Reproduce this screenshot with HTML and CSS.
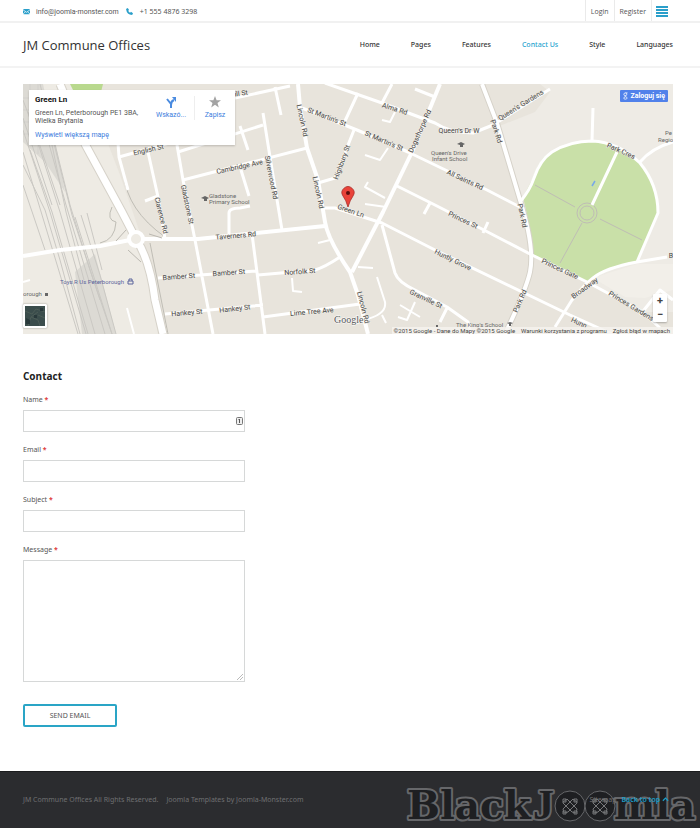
FILE: index.html
```html
<!DOCTYPE html>
<html lang="en">
<head>
<meta charset="utf-8">
<meta name="viewport" content="width=device-width, initial-scale=1">
<title>Contact Us - JM Commune Offices</title>
<link rel="stylesheet" href="styles.css">
</head>
<body>
<div class="topbar">
  <div class="contacts">
    <svg class="ico" viewBox="0 0 8 8" aria-hidden="true"><rect y="1" width="8" height="6" rx="1" fill="#2a9fca"/><path d="M0 2l4 3 4-3M0 7l3-3M8 7L5 4" fill="none" stroke="#fff" stroke-width=".8"/></svg>
    <a class="mail" href="#">info@joomla-monster.com</a>
    <svg class="ico phone" viewBox="0 0 8 8" aria-hidden="true"><path d="M0 1l2-1 1.500 2.200-1 1q.8 1.500 2.200 2.200l1-1L8 6 7 8Q1 7.500 0 1z" fill="#2a9fca"/></svg>
    <span>+1 555 4876 3298</span>
  </div>
  <div class="account">
    <a href="#">Login</a>
    <a href="#">Register</a>
    <button class="burger" type="button" aria-label="Menu"><i></i><i></i><i></i><i></i></button>
  </div>
</div>
<header class="header">
  <a class="logo" href="#">JM Commune Offices</a>
  <nav class="nav">
    <a href="#">Home</a><a href="#">Pages</a><a href="#">Features</a><a class="active" href="#">Contact Us</a><a href="#">Style</a><a href="#">Languages</a>
  </nav>
</header>
<main class="main">
  <section class="map">
    <svg class="canvas" viewBox="23 84 650 250" role="img" aria-label="Map of Green Ln, Peterborough">
      <rect x="23" y="84" width="650" height="250" fill="#e8e4dc"/>
      <path d="M23 84H85L120 175L142 239L158 334H23z" fill="#eeebe4"/>
      <path d="M482 84H673V312L643 312L587 282L532 255L520 200z" fill="#eeebe5"/>
      <path d="M470 84H540L550 92L535 112L497 127L470 135z" fill="#e8e4dc"/>
      <path d="M593 278L637 264H673V290L645 298L625 297z" fill="#f2efe9"/>
      <path d="M70 84h33l-3 12H76z" fill="#b9d98e"/>
      <path d="M523 197L532 180Q538 163 545 156Q565 141 592 141Q612 142 640 163Q656 180 658 210Q655 225 646 241L637 262Q612 266 587 282L532 255Q530 225 523 197z" fill="#c9e0a8"/>
      <g fill="#dcdad4"><path d="M23 84h20l14 66 8 42-20-30-22-20z"/><path d="M75 272L95 254L116 334H82z"/></g>
      <g class="rails">
        <path d="M23 152L78 334M23 130L50 212L86 334M28 112L60 212L95 334M34 90L66 205L105 334M40 84L70 205L90 270L112 334M46 112L72 215L100 300M23 165L45 210L60 260L80 334M30 150L52 212L88 334M52 145L66 212L84 280M75 217L98 290L112 334M81 215L100 275L116 334M87 213L102 270M23 185L45 250M23 100L38 140L60 205M23 118L52 205"/>
        <path d="M30 84v50M38 84v70M23 98h22M23 110h25M23 122h28M23 134h30" opacity=".5"/>
      </g>
      <g class="lane"><path d="M112 207Q106 220 116 222Q115 240 100 243M124 175Q127 210 165 237M150 243L168 334M535 185L575 207M600 219L642 240M582 223L560 263"/><circle cx="587" cy="213" r="10"/><circle cx="587" cy="213" r="7"/></g>
      <g class="casing road"><path d="M60 84L85 144L122 212L136 239Q150 260 155 300L163 334" stroke-width="9"/><path d="M482 84L497 123L520 200Q535 248 530 272Q526 290 505 334" stroke-width="6"/></g>
      <g class="road">
        <path d="M60 84L85 144L122 212L136 239Q150 260 155 300L163 334" stroke-width="7"/>
        <path d="M482 84L497 123L520 200Q535 248 530 272Q526 290 505 334" stroke-width="4"/>
        <path d="M23 256L60 250L100 246L130 240M143 239H198L325 226" stroke-width="4"/>
        <path d="M298 84L300 107L307 148L318 180L325 222Q328 240 350 272L358 295L368 334M440 84L412 152L383 212L352 272" stroke-width="4"/>
        <path d="M323 208H335L382 223L435 250L570 315L612 334M302 108L357 130L408 152L487 190L520 207M325 83L382 103L435 123Q450 133 473 133L493 125L550 89M395 185L435 205L480 228L532 255L587 282L643 312L660 328"/>
        <path d="M555 327L572 300Q584 285 593 278Q605 268 637 262L667 257M520 202Q530 190 534 178Q540 160 552 152Q570 141 592 141Q618 142 640 163Q658 185 658 213L646 241L637 262"/>
        <path d="M593 108L592 141M640 162Q652 148 673 142M617 152L592 205M640 315L660 290L673 300"/>
        <path d="M177 145L183 180L195 240L213 334M148 152L158 197L165 239M118 143L119 157L128 190M119 157L180 140M178 152L263 125M183 180L307 148M145 201L158 196M240 126L248 150M241 170L249 196M263 113L270 157L282 230M235 98L290 86M275 87L281 115M252 234L265 334M158 278L257 271M165 314L263 305M258 275L315 270Q325 267 340 257M263 317L360 304"/>
        <path d="M358 93L345 121M392 84L382 103M415 89L435 97M354 130L335 178L318 183M229 235V213Q229 208 240 208L250 206M382 225L395 273Q398 282 415 290L447 307L468 322L471 334M447 308L440 322M488 222L483 233M430 203L424 214"/>
        <g stroke-width="2"><path d="M292 278L293 291L302 292M318 243L330 240M358 267L373 268M377 277L385 302Q387 315 363 320M415 302L407 320L398 317M400 305L420 317M368 182L365 187L385 198M365 204L386 207M388 148L380 160L365 155M395 112L390 122L382 120M23 282L30 280M127 308L134 334M382 315L386 323"/></g>
        <circle cx="136" cy="239" r="7" stroke="#fff" stroke-width="4" fill="#eeebe4"/>
        <path d="M128 250L141 262M126 230L116 241M149 234L162 238" stroke="#bbb8b1" stroke-width="1"/>
      </g>
      <path d="M595 181l-3 5" stroke="#78a8e8" stroke-width="1.500"/>
      <g class="names">
        <text transform="translate(149 152) rotate(-13)">English St</text>
        <text transform="translate(240 169) rotate(-12)">Cambridge Ave</text>
        <text transform="translate(159 216) rotate(76)">Clarence Rd</text>
        <text transform="translate(185 205) rotate(78)">Gladstone St</text>
        <text transform="translate(269 178) rotate(79)">Silverwood Rd</text>
        <text transform="translate(300 121) rotate(78)">Lincoln Rd</text>
        <text transform="translate(316 193) rotate(78)">Lincoln Rd</text>
        <text transform="translate(361 308) rotate(76)">Lincoln Rd</text>
        <text transform="translate(326 119) rotate(21)">St Martin's St</text>
        <text transform="translate(383 143) rotate(23)">St Martin's St</text>
        <text transform="translate(344 163) rotate(-70)">Highbury St</text>
        <text transform="translate(394 111) rotate(17)">Alma Rd</text>
        <text transform="translate(422 132) rotate(-66)">Dogsthorpe Rd</text>
        <text transform="translate(459 133)">Queen's Dr W</text>
        <text transform="translate(522 107) rotate(-32)">Queen's Gardens</text>
        <text transform="translate(464 182) rotate(25)">All Saints Rd</text>
        <text transform="translate(494 132) rotate(72)">Park Rd</text>
        <text transform="translate(520 216) rotate(78)">Park Rd</text>
        <text transform="translate(522 302) rotate(-67)">Park Rd</text>
        <text transform="translate(620 153) rotate(24)">Park Cres</text>
        <text transform="translate(350 213) rotate(19)">Green Ln</text>
        <text transform="translate(462 222) rotate(25)">Princes St</text>
        <text transform="translate(452 262) rotate(26)">Huntly Grove</text>
        <text transform="translate(425 301) rotate(25)">Granville St</text>
        <text transform="translate(559 271) rotate(25)">Princes Gate</text>
        <text transform="translate(586 290) rotate(-36)">Broadway</text>
        <text transform="translate(630 308) rotate(31)">Princes Gardens</text>
        <text transform="translate(578 325) rotate(25)">Hunn</text>
        <text transform="translate(236 238) rotate(-5)">Taverners Rd</text>
        <text transform="translate(179 279) rotate(-4)">Bamber St</text>
        <text transform="translate(229 275) rotate(-4)">Bamber St</text>
        <text transform="translate(187 315) rotate(-5)">Hankey St</text>
        <text transform="translate(235 311) rotate(-6)">Hankey St</text>
        <text transform="translate(300 274) rotate(-4)">Norfolk St</text>
        <text transform="translate(312 314) rotate(-5)">Lime Tree Ave</text>
        <text transform="translate(239 96) rotate(-8)">Hill St</text>
        <text x="671" y="258">B</text>
      </g>
      <g class="places">
        <text x="209" y="198">Gladstone</text><text x="209" y="204">Primary School</text>
        <text x="431" y="155">Queen's Drive</text><text x="432" y="161">Infant School</text>
        <text x="665" y="135">Pe</text><text x="658" y="142">Regio</text>
        <text x="23" y="296">orough</text><text x="456" y="327">The King's School</text>
        <text x="60" y="284" fill="#5a659c">Toys R Us Peterborough</text>
        <path d="M201 198l4-2 4 2-2 1v2h-3v-2zM457 144l4-2 4 2-2 1v2h-3v-2zM507 323l3-1 3 1-2 1v2h-2v-2zM45 293h3v3h-3zM436 325h2v2h-2z" fill="#666"/>
        <path d="M128 281h5v3h-5zM129 281v-2h3v2" fill="none" stroke="#5a659c"/>
      </g>
      <text class="google" x="334" y="323">Google</text>
      <path d="M348 207Q346 200 343 196A6 6 0 1 1 353 196Q350 200 348 207z" fill="#e9433a" stroke="#a92c27" stroke-width=".8"/><circle cx="348" cy="193" r="2" fill="#5c0f0d"/>
    </svg>
    <div class="place">
      <div class="where">
        <strong>Green Ln</strong>
        <p>Green Ln, Peterborough PE1 3BA,<br>Wielka Brytania</p>
        <a href="#">Wyświetl większą mapę</a>
      </div>
      <a class="act" href="#"><svg viewBox="0 0 12 12" aria-hidden="true"><path d="M6 12V8L2 3M6 9Q6 5 9 4" fill="none" stroke="#4a8be0" stroke-width="2"/><path d="M7 1h4v5z" fill="#4a8be0"/></svg>Wskazó...</a>
      <a class="act save" href="#"><svg viewBox="0 0 12 12" aria-hidden="true"><path d="M6 0l1.600 4.300H12L8.500 7l1.300 4.500L6 8.800 2.200 11.500 3.500 7 0 4.300h4.400z" fill="#a3a3a3"/></svg>Zapisz</a>
    </div>
    <button class="signin" type="button"><svg viewBox="0 0 6 9" aria-hidden="true"><path d="M5.500 .8H3Q1 .8 1 2.500T3 4Q4.500 4 4.500 2.500T3 .8M3 4q-1 .6 0 1.200Q5 6 5 7T3 8.300 1 7t2-1.500" fill="none" stroke="#fff" stroke-width=".9"/></svg>Zaloguj się</button>
    <button class="satellite" type="button" aria-label="Satellite"><svg viewBox="0 0 20 20" aria-hidden="true"><rect width="20" height="20" fill="#3b4d4c"/><path d="M0 5l7 3 4-5 9 3M3 20l3-9 7 3 2 6M13 9l7 3M6 11l7-5" fill="none" stroke="#4c5c57"/><path d="M1 12l4 2v4H1zM15 2h3v3h-3zM9 9h3v3H9z" fill="#29393b"/></svg></button>
    <div class="zoom"><button type="button">+</button><button type="button">−</button></div>
    <div class="credits"><span>©2015 Google - Dane do Mapy ©2015 Google</span><a href="#">Warunki korzystania z programu</a><a href="#">Zgłoś błąd w mapach</a></div>
  </section>
  <form class="form">
    <h1>Contact</h1>
    <div class="field"><label for="name">Name <b>*</b></label><div class="box"><input id="name" type="text"><svg class="fill" viewBox="0 0 7 8" aria-hidden="true"><rect x=".5" y=".5" width="6" height="7" rx="1" fill="#eee" stroke="#777"/><path d="M3.500 2v4M2.500 3l1-1" stroke="#555"/></svg></div></div>
    <div class="field"><label for="email">Email <b>*</b></label><input id="email" type="email"></div>
    <div class="field"><label for="subject">Subject <b>*</b></label><input id="subject" type="text"></div>
    <div class="field"><label for="message">Message <b>*</b></label><div class="box"><textarea id="message"></textarea><svg class="grip" viewBox="0 0 6 6" aria-hidden="true"><path d="M0 6l6-6M3 6l3-3" stroke="#bbb"/></svg></div></div>
    <button class="send" type="submit">SEND EMAIL</button>
  </form>
</main>
<footer class="footer">
  <p>JM Commune Offices All Rights Reserved.<span>Joomla Templates by Joomla-Monster.com</span></p>
  <svg class="watermark" viewBox="0 0 294 44" role="img" aria-label="BlackJoomla">
    <g class="word"><text x="1" y="35">Black</text><text class="jay" x="127" y="35">J</text><text x="208" y="35">mla</text></g>
    <g fill="#1e1f22" stroke="#66676a"><circle cx="164" cy="22" r="15"/><circle cx="194" cy="22" r="15"/></g>
    <g fill="none" stroke="#77787a"><path id="knot" d="M157 18l4-3 10 10-1 4-4-1-9-9zM171 18l-4-3-10 10 1 4 4-1 9-9zM157 15h3v3h-3zM168 15h3v3h-3zM157 27h3v3h-3zM168 27h3v3h-3z"/><use href="#knot" x="30"/></g>
  </svg>
  <div class="links"><a href="#">Sitemap</a><a class="top" href="#">Back to top <svg viewBox="0 0 8 6" aria-hidden="true"><path d="M1 5l3-3 3 3" fill="none" stroke="#1b9cc6" stroke-width="1.500"/></svg></a></div>
</footer>
</body>
</html>
```
FILE: styles.css
```css
* { box-sizing: border-box; }
body {
  margin: 0;
  min-height: 100vh;
  display: flex;
  flex-direction: column;
  background: #fff;
  color: #555;
  font: 7px/14px "Noto Sans", "Open Sans", sans-serif;
}
a { color: inherit; text-decoration: none; }
p { margin: 0; }
button { font: inherit; cursor: pointer; }

.topbar {
  display: flex;
  justify-content: space-between;
  height: 23px;
  padding: 0 27px 0 23px;
  border-bottom: 2px solid #f1f1f1;
}
.contacts { display: flex; align-items: center; padding-top: 2px; }
.mail { font-family: Roboto, sans-serif; }
.ico { width: 7px; height: 7px; margin-right: 6px; }
.phone { margin-left: 7px; margin-right: 7px; }
.account { display: flex; font-family: "Open Sans", sans-serif; }
.account a { padding: 5px 5px 0; border-left: 1px solid #eaeaea; }
.burger {
  display: flex;
  flex-direction: column;
  gap: 1px;
  padding: 6px 5px 0 4px;
  border: 0;
  border-left: 1px solid #eaeaea;
  background: none;
}
.burger i { width: 12px; height: 2px; background: #2a9fca; }

.header {
  display: flex;
  align-items: center;
  justify-content: space-between;
  height: 45px;
  padding: 0 27px 0 23px;
  border-bottom: 2px solid #f3f3f3;
}
.logo { color: #333; font-family: "Open Sans", sans-serif; font-size: 13px; }
.nav { display: flex; gap: 31px; color: #333; font-weight: 500; }
.nav .active { color: #2aa5cf; }

.main { flex: 1; padding: 16px 27px 44px 23px; }
.map { position: relative; font: 7px/8px Roboto, sans-serif; }
.canvas { display: block; width: 100%; height: auto; }
.rails { fill: none; stroke: #cac8c3; stroke-width: 1; }
.lane { fill: none; stroke: #bfbdb5; stroke-width: 1; }
.road { fill: none; stroke: #fff; stroke-width: 3; stroke-linejoin: round; }
.casing { stroke: #d6d2c9; }
.names { text-anchor: middle; font-size: 7px; fill: #444; stroke: #f0ede6; stroke-width: 1; paint-order: stroke; }
.places { font-size: 6px; fill: #666; }
.google { font: 10px "Liberation Serif", serif; fill: #555; stroke: #fff; stroke-width: 1; paint-order: stroke; }
.place {
  position: absolute;
  top: 6px;
  left: 6px;
  display: flex;
  width: 206px;
  height: 55px;
  padding: 6px 0;
  background: #fff;
  box-shadow: 0 1px 2px #0003;
}
.where { flex: 1; padding-left: 6px; white-space: nowrap; }
.where strong { display: block; margin-bottom: 5px; color: #111; font-size: 8px; }
.where a { display: block; margin-top: 6px; color: #3b7ddd; }
.act {
  display: flex;
  flex-direction: column;
  align-items: center;
  gap: 3px;
  width: 46px;
  height: 24px;
  color: #3b7ddd;
}
.act svg { width: 12px; height: 12px; }
.save { width: 41px; border-left: 1px solid #eee; }
.signin {
  position: absolute;
  top: 6px;
  right: 5px;
  display: flex;
  align-items: center;
  gap: 2px;
  height: 12px;
  padding: 0 3px;
  border: 0;
  border-radius: 1px;
  background: #5181ea;
  color: #fff;
  font-weight: 700;
}
.signin svg { width: 5px; height: 8px; }
.satellite {
  position: absolute;
  left: 0;
  bottom: 6px;
  width: 24px;
  height: 24px;
  padding: 1px;
  border: 1px solid #fff;
  border-radius: 1px;
  background: #fff;
  box-shadow: 0 0 2px #0006;
}
.satellite svg { display: block; width: 20px; height: 20px; }
.zoom {
  position: absolute;
  right: 6px;
  bottom: 12px;
  width: 14px;
  background: #fff;
  border-radius: 1px;
  box-shadow: 0 1px 2px #0004;
}
.zoom button {
  display: block;
  width: 100%;
  height: 14px;
  padding: 0;
  border: 0;
  background: none;
  color: #444;
  font: 700 11px/14px Roboto, sans-serif;
}
.credits {
  position: absolute;
  right: 0;
  bottom: 0;
  display: flex;
  gap: 6px;
  padding: 0 3px 0 2px;
  background: #f5f3efcc;
  color: #444;
  font-size: 6px;
  line-height: 7px;
}

.form { width: 222px; margin-top: 34px; }
.form h1 { margin: 0 0 9px; color: #222; font: 700 10px/16px "Open Sans", sans-serif; }
.field { display: flex; flex-direction: column; gap: 3px; margin-bottom: 11px; }
.field b { color: #e04040; }
.field input, .field textarea {
  display: block;
  width: 100%;
  height: 22px;
  padding: 2px 6px;
  border: 1px solid #d6d8d8;
  background: #fff;
  font: inherit;
}
.field textarea { height: 122px; resize: none; }
.box { position: relative; }
.fill { position: absolute; right: 2px; top: 7px; width: 7px; height: 8px; }
.grip { position: absolute; right: 2px; bottom: 2px; width: 6px; height: 6px; }
.send {
  display: block;
  width: 94px;
  height: 23px;
  margin-top: 22px;
  padding: 0;
  border: 2px solid #2aa5c6;
  border-radius: 2px;
  background: #fff;
  color: #555;
}

.footer {
  position: relative;
  display: flex;
  align-items: center;
  justify-content: space-between;
  height: 57px;
  padding: 0 31px 0 23px;
  border-top: 1px solid #1b1c1e;
  background: #2b2c2f;
  color: #6f7072;
}
.footer span { margin-left: 8px; }
.links { position: relative; display: flex; gap: 5px; }
.top { color: #1b9cc6; font-weight: 600; }
.top svg { width: 7px; height: 6px; }
.watermark { position: absolute; right: 0; bottom: 0; width: 294px; height: 44px; }
.word { font: 700 39px "DejaVu Serif", serif; fill: #1e1f22; stroke: #66676a; stroke-width: 4; stroke-linejoin: round; paint-order: stroke; }
.jay { font: 700 42px "Liberation Serif", serif; }
```
